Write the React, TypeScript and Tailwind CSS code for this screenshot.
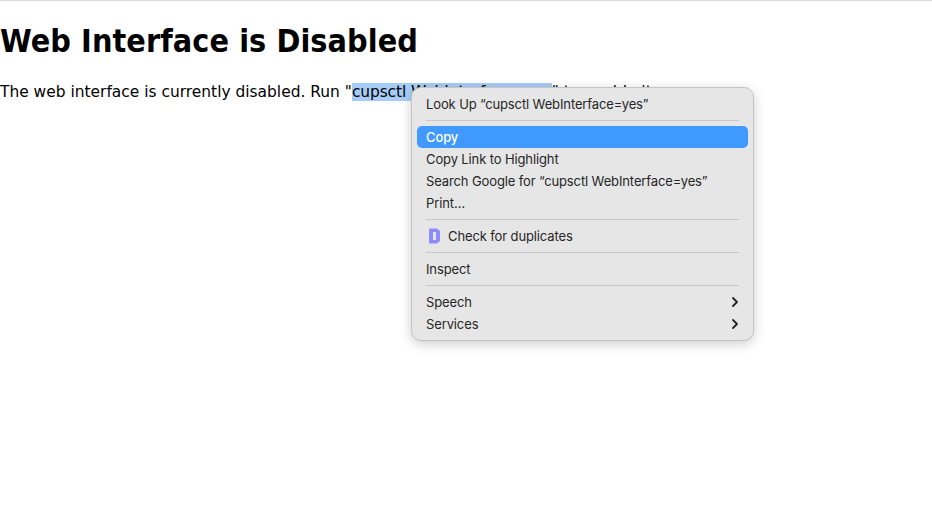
import React from 'react';

const menuFont = "font-['Inter','Noto_Sans',sans-serif]";

const Separator = () => (
  <div className="h-[11px] flex items-center px-[9px]">
    <div className="h-px w-full bg-[#c9c9c9]" />
  </div>
);

const Item = ({ label, active, submenu, icon }: { label: string; active?: boolean; submenu?: boolean; icon?: React.ReactNode }) => (
  <div
    className={`h-[22px] flex items-center px-[9px] rounded-[5px] text-[13px] tracking-[-0.12px] leading-[22px] whitespace-nowrap ${
      active ? 'bg-[#4099ff] text-white font-medium' : 'text-[#262626]'
    }`}
  >
    {icon}
    <span className="flex-1">{label}</span>
    {submenu && (
      <svg width="8" height="12" viewBox="0 0 8 12" fill="none" stroke="#222222" strokeWidth="1.8" strokeLinecap="round" strokeLinejoin="round">
        <path d="M2 2l4 4-4 4" />
      </svg>
    )}
  </div>
);

const DupIcon = () => (
  <svg width="13" height="16" viewBox="0 0 13 16" className="ml-[2px] mr-[7px]">
    <path d="M1 0.5h8l3 2.5v10l-3 2.5H1z" fill="#8c8cfb" />
    <rect x="5" y="4" width="3" height="8" fill="#e4e4f8" />
  </svg>
);

export default function App() {
  return (
    <div className="relative min-h-[513px] bg-white border-t border-[#d9d9d9] font-['DejaVu_Sans',sans-serif] text-black overflow-hidden">
      <h1 className="font-['DejaVu_Sans_Condensed','DejaVu_Sans',sans-serif] text-[32px] leading-[38px] tracking-[0.08px] font-bold mt-[21px] whitespace-nowrap">Web Interface is Disabled</h1>
      <p className="text-[15.45px] leading-[18px] mt-[23px] whitespace-nowrap">
        The web interface is currently disabled. Run "<span className="bg-[#a6cdf7] tracking-[-0.1px]">cupsctl WebInterface=yes</span>" to enable it.
      </p>

      <div className={`absolute left-[411px] top-[86px] w-[343px] h-[254px] p-[5px] rounded-[10px] bg-[#e6e6e6] border border-[#c4c4c4] shadow-[0_3px_12px_rgba(0,0,0,0.2)] ${menuFont}`}>
        <Item label="Look Up “cupsctl WebInterface=yes”" />
        <Separator />
        <Item label="Copy" active />
        <Item label="Copy Link to Highlight" />
        <Item label="Search Google for “cupsctl WebInterface=yes”" />
        <Item label="Print…" />
        <Separator />
        <Item label="Check for duplicates" icon={<DupIcon />} />
        <Separator />
        <Item label="Inspect" />
        <Separator />
        <Item label="Speech" submenu />
        <Item label="Services" submenu />
      </div>
    </div>
  );
}
